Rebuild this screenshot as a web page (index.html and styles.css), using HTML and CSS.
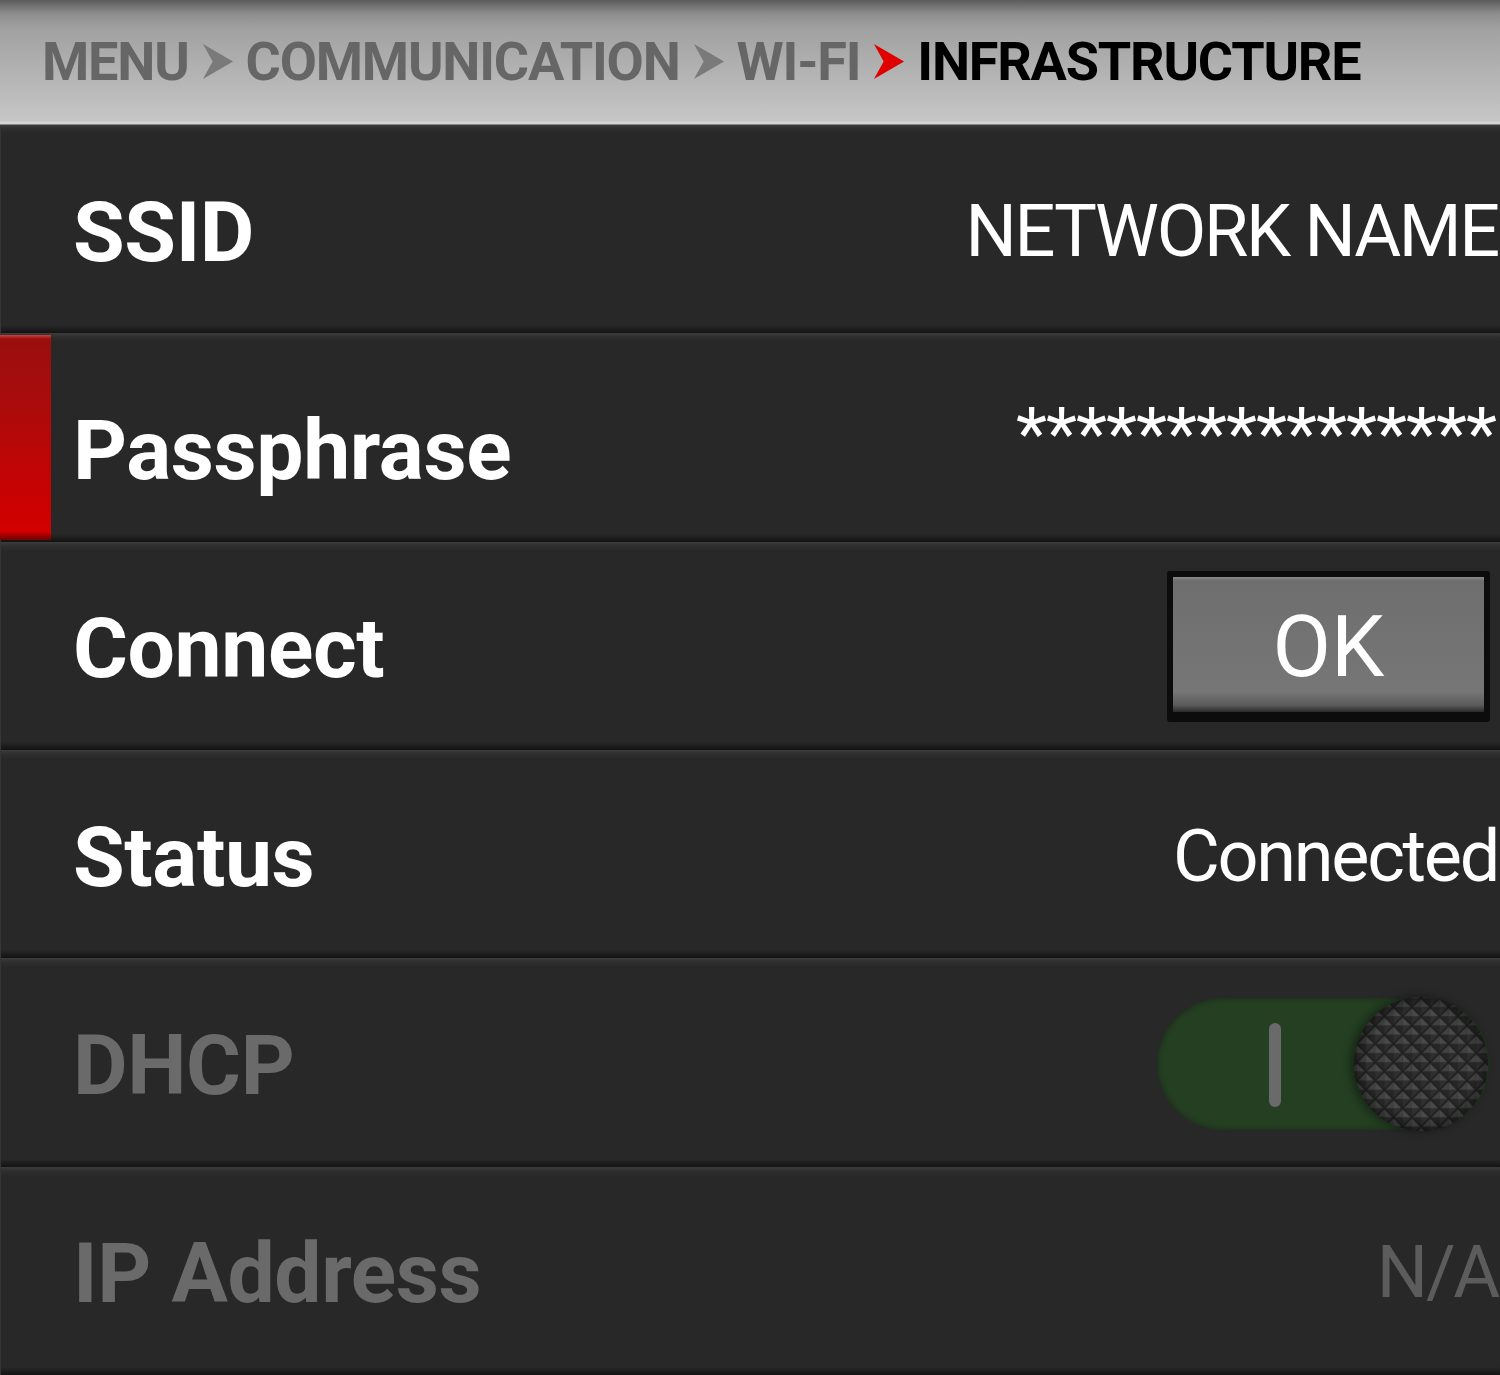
FILE: index.html
```html
<!DOCTYPE html>
<html>
<head>
<meta charset="utf-8">
<link rel="stylesheet" href="styles.css">
</head>
<body>
<div class="screen">
  <header class="crumbs">
    <span class="crumb">MENU</span>
    <svg class="chev" viewBox="0 0 34 40"><path d="M2 2 L33 20 L2 38 L12 20 Z" fill="#7a7a7a"/></svg>
    <span class="crumb">COMMUNICATION</span>
    <svg class="chev" viewBox="0 0 34 40"><path d="M2 2 L33 20 L2 38 L12 20 Z" fill="#7a7a7a"/></svg>
    <span class="crumb">WI-FI</span>
    <svg class="chev" viewBox="0 0 34 40"><path d="M2 2 L33 20 L2 38 L12 20 Z" fill="#e00000"/></svg>
    <span class="crumb current">INFRASTRUCTURE</span>
  </header>
  <div class="rows">
    <div class="row">
      <span class="label">SSID</span>
      <span class="value">NETWORK NAME</span>
    </div>
    <div class="row selected">
      <span class="label">Passphrase</span>
      <span class="value stars">****************</span>
    </div>
    <div class="row">
      <span class="label">Connect</span>
      <div class="btn"><span>OK</span></div>
    </div>
    <div class="row">
      <span class="label">Status</span>
      <span class="value">Connected</span>
    </div>
    <div class="row disabled">
      <span class="label">DHCP</span>
      <div class="toggle">
        <span class="tick"></span>
        <svg class="knob" viewBox="0 0 136 136">
          <defs>
            <pattern id="dia" width="13" height="13" patternUnits="userSpaceOnUse" patternTransform="translate(68 2) rotate(45)">
              <rect width="13" height="13" fill="#1e1e1e"/>
              <path d="M0.8 0.8 L12.2 0.8 L6.5 6.5 Z" fill="#4a4a4a"/>
              <path d="M0.8 0.8 L0.8 12.2 L6.5 6.5 Z" fill="#414141"/>
              <path d="M12.2 0.8 L12.2 12.2 L6.5 6.5 Z" fill="#2f2f2f"/>
              <path d="M0.8 12.2 L12.2 12.2 L6.5 6.5 Z" fill="#262626"/>
            </pattern>
            <radialGradient id="shade" cx="50%" cy="50%" r="50%">
              <stop offset="80%" stop-color="#000" stop-opacity="0"/>
              <stop offset="100%" stop-color="#000" stop-opacity="0.35"/>
            </radialGradient>
          </defs>
          <circle cx="68" cy="68" r="67" fill="url(#dia)"/>
          <circle cx="68" cy="68" r="67" fill="url(#shade)"/>
        </svg>
      </div>
    </div>
    <div class="row disabled">
      <span class="label">IP Address</span>
      <span class="value">N/A</span>
    </div>
  </div>
</div>
</body>
</html>
```

FILE: styles.css
```css
html, body {
  margin: 0;
  padding: 0;
  background: #282828;
}
.screen {
  width: 1500px;
  height: 1375px;
  overflow: hidden;
  display: flex;
  flex-direction: column;
  font-family: Roboto, "Liberation Sans", sans-serif;
}
.crumbs {
  height: 125px;
  flex: none;
  display: flex;
  align-items: center;
  gap: 12px;
  padding: 0 0 2px 42px;
  box-sizing: border-box;
  background: linear-gradient(to bottom, #5c5c5c 0px, #8e8e8e 14px, #a2a2a2 30px, #c6c6c6 121px, #d4d4d4 122px, #d4d4d4 124px, #3a3a3a 125px);
}
.crumb {
  font-weight: 700;
  font-size: 54px;
  color: #666;
  letter-spacing: -1.2px;
}
.crumb.current {
  color: #000;
}
.chev {
  width: 33px;
  height: 39px;
  flex: none;
}
.rows {
  flex: 1;
  display: flex;
  flex-direction: column;
}
.row {
  flex: 1;
  display: flex;
  align-items: center;
  justify-content: space-between;
  padding-left: 72px;
  box-sizing: border-box;
  position: relative;
  background: linear-gradient(to bottom, #3c3c3c 0px, #2e2e2e 4px, #282828 9px, #282828 calc(100% - 8px), #1d1d1d calc(100% - 4px), #131313 100%);
  border-left: 1px solid #353535;
}
.row.selected::before {
  content: "";
  position: absolute;
  left: -1px;
  top: 2px;
  bottom: 2px;
  width: 51px;
  background: linear-gradient(to bottom, #c84040 0px, #9a0e0e 4px, #a80c0c 60px, #d00000 185px, #d40000 196px, #7a0000 204px);
}
.label {
  font-weight: 700;
  font-size: 84px;
  color: #fff;
  letter-spacing: -0.4px;
  margin-top: 6px;
}
.selected .label {
  margin-top: 26px;
}
.value {
  font-size: 72px;
  color: #fff;
  letter-spacing: -2.3px;
  margin-right: 2px;
  margin-top: 4px;
}
.value.stars {
  margin-top: -6px;
  letter-spacing: -1px;
  margin-right: 4px;
}
.disabled .label {
  color: #6a6a6a;
}
.disabled .value {
  color: #5c5c5c;
}
.btn {
  width: 323px;
  height: 151px;
  box-sizing: border-box;
  background: #0c0c0c;
  border-radius: 3px;
  padding: 6px 6px 10px 6px;
  margin-right: 10px;
  margin-top: 2px;
}
.btn span {
  display: flex;
  align-items: center;
  justify-content: center;
  height: 100%;
  background: linear-gradient(to bottom, #8a8a8a 0px, #6e6e6e 4px, #737373 50%, #767676 85%, #5a5a5a 95%, #2a2a2a 100%);
  color: #fff;
  font-size: 85px;
  padding-top: 4px;
  box-sizing: border-box;
}
.toggle {
  width: 333px;
  height: 132px;
  border-radius: 66px;
  background: #243f22;
  position: relative;
  margin-right: 10px;
  margin-top: 4px;
  box-shadow: inset 0 0 6px rgba(0,0,0,0.35);
}
.tick {
  position: absolute;
  left: 112px;
  top: 25px;
  width: 12px;
  height: 84px;
  border-radius: 6px;
  background: #6a6a6a;
}
.knob {
  position: absolute;
  right: 1px;
  top: -2px;
  width: 136px;
  height: 136px;
  filter: drop-shadow(-3px 0 5px rgba(0,0,0,0.45));
}
```
